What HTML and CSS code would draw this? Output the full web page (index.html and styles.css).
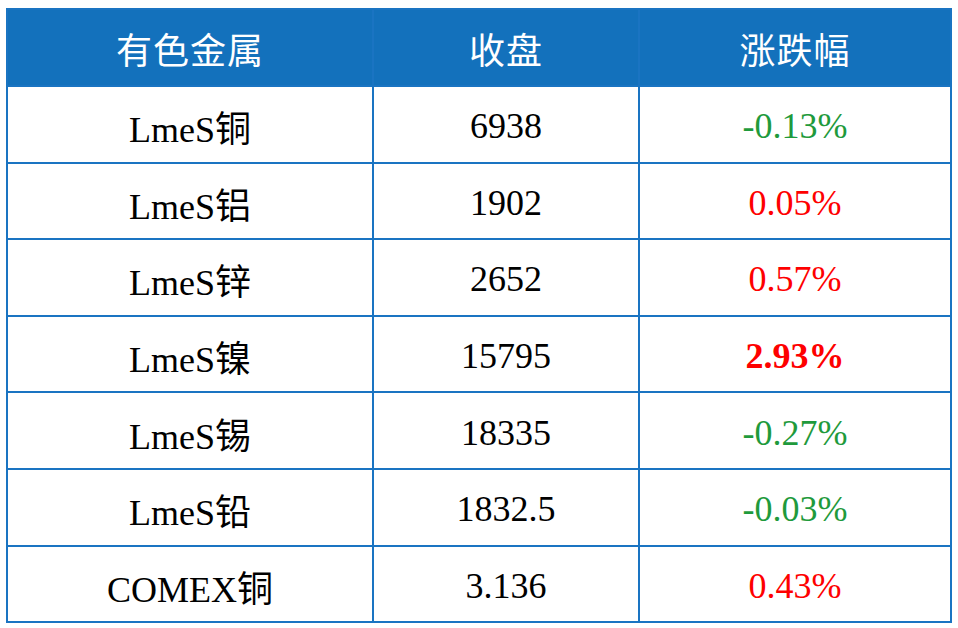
FILE: index.html
```html
<!DOCTYPE html>
<html lang="zh">
<head>
<meta charset="utf-8">
<link rel="stylesheet" href="styles.css">
</head>
<body>
<table class="quote">
  <colgroup>
    <col class="c1"><col class="c2"><col class="c3">
  </colgroup>
  <thead>
    <tr><th>有色金属</th><th>收盘</th><th>涨跌幅</th></tr>
  </thead>
  <tbody>
    <tr><td>LmeS铜</td><td>6938</td><td class="down">-0.13%</td></tr>
    <tr><td>LmeS铝</td><td>1902</td><td class="up">0.05%</td></tr>
    <tr><td>LmeS锌</td><td>2652</td><td class="up">0.57%</td></tr>
    <tr><td>LmeS镍</td><td>15795</td><td class="up strong">2.93%</td></tr>
    <tr><td>LmeS锡</td><td>18335</td><td class="down">-0.27%</td></tr>
    <tr><td>LmeS铅</td><td>1832.5</td><td class="down">-0.03%</td></tr>
    <tr><td>COMEX铜</td><td>3.136</td><td class="up">0.43%</td></tr>
  </tbody>
</table>
</body>
</html>
```

FILE: styles.css
```css
html, body {
  margin: 0;
  padding: 0;
  background: #ffffff;
}
body {
  padding: 8px 0 0 6px;
}
.quote {
  border-collapse: collapse;
  table-layout: fixed;
  width: 944px;
  font-family: "Liberation Serif", "Noto Sans CJK SC", serif;
  font-size: 36px;
  color: #000;
}
.c1 { width: 366px; }
.c2 { width: 266px; }
.c3 { width: 312px; }
.quote th, .quote td {
  border: 2px solid #1a74c2;
  height: 75px;
  padding: 0;
  text-align: center;
  vertical-align: middle;
}
.quote td {
  height: 70.6px;
  padding-top: 4px;
}
.quote th {
  background: #1371bc;
  color: #ffffff;
  font-family: "Noto Sans CJK SC", sans-serif;
  font-weight: 400;
  font-size: 36px;
  letter-spacing: 1px;
}
.quote td.down { color: #1f9a3c; }
.quote td.up { color: #fe0000; }
.quote td.strong { font-weight: 700; }
```
